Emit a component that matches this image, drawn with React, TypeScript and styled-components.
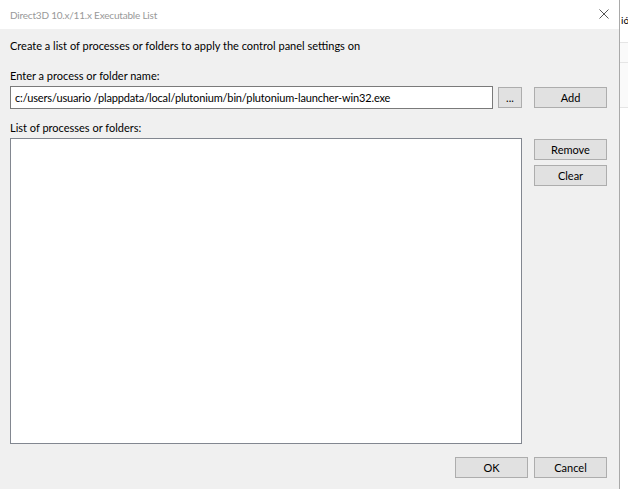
import React from "react";
import styled, { createGlobalStyle } from "styled-components";

const GlobalStyle = createGlobalStyle`
  html, body {
    margin: 0;
    padding: 0;
    background: #ffffff;
  }
  body {
    font-family: Lato, "Noto Sans", sans-serif;
    font-size: 11px;
    color: #000000;
  }
`;

const Screen = styled.div`
  display: flex;
  width: 628px;
  height: 489px;
  overflow: hidden;
`;

const Dialog = styled.div`
  width: 619px;
  flex-shrink: 0;
  display: flex;
  flex-direction: column;
  border-right: 1px solid #a9a9a9;
  background: #f0f0f0;
`;

const TitleBar = styled.div`
  height: 29px;
  background: #ffffff;
  display: flex;
  align-items: center;
  justify-content: space-between;
  padding: 0 10px 0 10px;
`;

const Title = styled.span`
  color: #999999;
  font-size: 10px;
  letter-spacing: -0.2px;
  line-height: 16px;
`;

const CloseButton = styled.span`
  display: flex;
  width: 10px;
  height: 10px;
  margin-top: -2px;
`;

const Body = styled.div`
  flex: 1;
  display: flex;
  flex-direction: column;
  padding: 9px 12px 11px 10px;
`;

const Label = styled.div<{ $gap: number }>`
  line-height: 16px;
  white-space: nowrap;
  margin-bottom: ${(p) => p.$gap}px;
`;

const Grid = styled.div`
  display: grid;
  grid-template-columns: 512px 73px;
  column-gap: 12px;
`;

const InputRow = styled.div`
  display: flex;
  align-items: center;
  gap: 5px;
  margin-bottom: 11px;
`;

const TextInput = styled.div`
  flex: 1;
  height: 23px;
  box-sizing: border-box;
  border: 1px solid #7a7a7a;
  background: #ffffff;
  padding: 0 4px;
  display: flex;
  align-items: center;
  white-space: nowrap;
  letter-spacing: -0.15px;
  overflow: hidden;
`;

const Button = styled.button<{ $w?: number }>`
  width: ${(p) => p.$w ?? 73}px;
  height: 21px;
  box-sizing: border-box;
  border: 1px solid #adadad;
  background: #e1e1e1;
  font-family: inherit;
  font-size: 11px;
  color: #000000;
  padding: 0;
  display: flex;
  align-items: center;
  justify-content: center;
`;

const SideCell = styled.div`
  display: flex;
  align-items: center;
  height: 23px;
`;

const ListBox = styled.div`
  height: 306px;
  box-sizing: border-box;
  border: 1px solid #828790;
  background: #ffffff;
`;

const SideButtons = styled.div`
  display: flex;
  flex-direction: column;
  gap: 5px;
  padding-top: 1px;
`;

const Footer = styled.div`
  display: flex;
  justify-content: flex-end;
  gap: 6px;
  margin-top: 13px;
`;

const Backdrop = styled.div`
  flex: 1;
  display: flex;
  flex-direction: column;
  background: #ffffff;
  overflow: hidden;
`;

const BackTitle = styled.div`
  height: 43px;
  box-sizing: border-box;
  padding: 12px 0 0 1px;
  line-height: 16px;
  font-size: 10px;
  white-space: nowrap;
  border-bottom: 1px solid #e5e5e5;
`;

const BackRow = styled.div<{ $h: number }>`
  height: ${(p) => p.$h}px;
  box-sizing: border-box;
  border-bottom: 1px solid #e5e5e5;
  background: #fafafa;
`;

const CloseIcon = () => (
  <svg width="10" height="10" viewBox="0 0 10 10">
    <path d="M0.5 0.5 L9.5 9.5 M9.5 0.5 L0.5 9.5" stroke="#555555" strokeWidth="1" fill="none" />
  </svg>
);

export default function App() {
  return (
    <>
      <GlobalStyle />
      <Screen>
        <Dialog>
          <TitleBar>
            <Title>Direct3D 10.x/11.x Executable List</Title>
            <CloseButton>
              <CloseIcon />
            </CloseButton>
          </TitleBar>
          <Body>
            <Label $gap={14}>Create a list of processes or folders to apply the control panel settings on</Label>
            <Label $gap={2}>Enter a process or folder name:</Label>
            <Grid>
              <InputRow>
                <TextInput>c:/users/usuario /plappdata/local/plutonium/bin/plutonium-launcher-win32.exe</TextInput>
                <Button $w={24}>...</Button>
              </InputRow>
              <SideCell>
                <Button>Add</Button>
              </SideCell>
            </Grid>
            <Label $gap={2}>List of processes or folders:</Label>
            <Grid>
              <ListBox />
              <SideButtons>
                <Button>Remove</Button>
                <Button>Clear</Button>
              </SideButtons>
            </Grid>
            <Footer>
              <Button>OK</Button>
              <Button>Cancel</Button>
            </Footer>
          </Body>
        </Dialog>
        <Backdrop>
          <BackTitle>ió</BackTitle>
          <BackRow $h={20} />
          <BackRow $h={45} />
        </Backdrop>
      </Screen>
    </>
  );
}
